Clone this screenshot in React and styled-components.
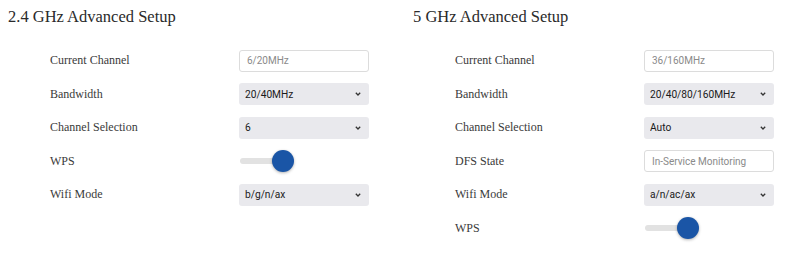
import React from 'react'
import styled, { createGlobalStyle } from 'styled-components'

const GlobalStyle = createGlobalStyle`
  body {
    margin: 0;
    background: #fff;
    font-family: "Liberation Serif", "Times New Roman", serif;
  }
`

const Page = styled.div`
  display: grid;
  grid-template-columns: 405px 395px;
  padding: 0 0 0 8px;
`

const Section = styled.section`
  display: flex;
  flex-direction: column;
`

const Title = styled.h2`
  margin: 6px 0 16px;
  font-size: 16.5px;
  font-weight: 400;
  line-height: 22px;
  color: #2a2a2a;
`

const Rows = styled.div`
  display: flex;
  flex-direction: column;
  padding-left: 42px;
`

const Row = styled.div`
  display: grid;
  grid-template-columns: 189px 130px;
  align-items: center;
  height: 33.5px;
`

const Label = styled.label`
  font-size: 12px;
  color: #3a3a3a;
`

const TextBox = styled.input`
  box-sizing: border-box;
  width: 130px;
  height: 22px;
  padding: 0 7px;
  border: 1px solid #dcdcdc;
  border-radius: 3px;
  background: #fff;
  font-family: Roboto, "Noto Sans", sans-serif;
  font-size: 10px;
  color: #8a8a8a;
  outline: none;
`

const SelectWrap = styled.div`
  position: relative;
  width: 130px;
  height: 22px;
`

const Select = styled.select`
  appearance: none;
  box-sizing: border-box;
  width: 100%;
  height: 100%;
  padding: 0 20px 0 6px;
  border: 0;
  border-radius: 3px;
  background: #e9e9ed;
  font-family: Roboto, "Noto Sans", sans-serif;
  font-size: 10.2px;
  color: #1a1a1a;
  outline: none;
`

const Chevron = styled.svg`
  position: absolute;
  right: 8px;
  top: 9px;
  pointer-events: none;
`

const Switch = styled.div`
  position: relative;
  width: 56px;
  height: 22px;
`

const Track = styled.div`
  position: absolute;
  left: 1px;
  top: 8px;
  width: 40px;
  height: 6px;
  border-radius: 3px;
  background: #e2e2e2;
`

const Knob = styled.div`
  position: absolute;
  left: ${p => (p.$on ? '33px' : '0')};
  top: 0;
  width: 22px;
  height: 22px;
  border-radius: 50%;
  background: #1a55a6;
  box-shadow: 0 1px 3px rgba(0, 0, 0, 0.3);
`

const Dropdown = ({ value }) => (
  <SelectWrap>
    <Select defaultValue={value}>
      <option value={value}>{value}</option>
    </Select>
    <Chevron width="6" height="4" viewBox="0 0 6 4">
      <path d="M0.8 0.8l2.2 2.2 2.2-2.2" fill="none" stroke="#333" strokeWidth="1.3" />
    </Chevron>
  </SelectWrap>
)

const Toggle = ({ on }) => (
  <Switch>
    <Track />
    <Knob $on={on} />
  </Switch>
)

const band24 = [
  { label: 'Current Channel', type: 'text', value: '6/20MHz' },
  { label: 'Bandwidth', type: 'select', value: '20/40MHz' },
  { label: 'Channel Selection', type: 'select', value: '6' },
  { label: 'WPS', type: 'switch', value: true },
  { label: 'Wifi Mode', type: 'select', value: 'b/g/n/ax' },
]

const band5 = [
  { label: 'Current Channel', type: 'text', value: '36/160MHz' },
  { label: 'Bandwidth', type: 'select', value: '20/40/80/160MHz' },
  { label: 'Channel Selection', type: 'select', value: 'Auto' },
  { label: 'DFS State', type: 'text', value: 'In-Service Monitoring' },
  { label: 'Wifi Mode', type: 'select', value: 'a/n/ac/ax' },
  { label: 'WPS', type: 'switch', value: true },
]

const Field = ({ item }) => {
  if (item.type === 'text') return <TextBox readOnly value={item.value} />
  if (item.type === 'select') return <Dropdown value={item.value} />
  return <Toggle on={item.value} />
}

const Band = ({ title, items }) => (
  <Section>
    <Title>{title}</Title>
    <Rows>
      {items.map(item => (
        <Row key={item.label}>
          <Label>{item.label}</Label>
          <Field item={item} />
        </Row>
      ))}
    </Rows>
  </Section>
)

export default function App() {
  return (
    <>
      <GlobalStyle />
      <Page>
        <Band title="2.4 GHz Advanced Setup" items={band24} />
        <Band title="5 GHz Advanced Setup" items={band5} />
      </Page>
    </>
  )
}
